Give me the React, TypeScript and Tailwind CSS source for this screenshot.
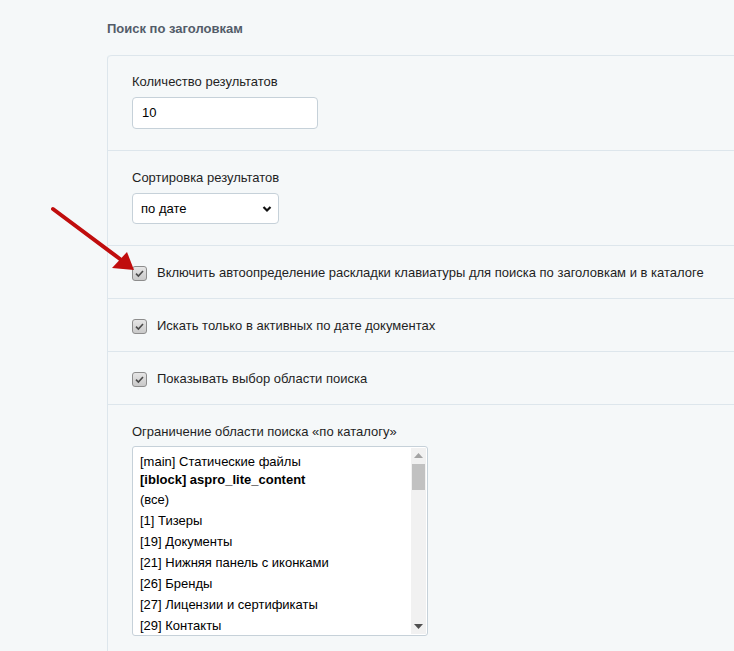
import React from 'react';

const font = { fontFamily: '"Liberation Sans", Arial, sans-serif' };

const CheckMark = () => (
  <span className="flex h-[15px] w-[15px] shrink-0 items-center justify-center rounded-[3px] border border-[#8d8d8d] bg-gradient-to-b from-[#e6e6e6] to-[#c9c9c9]">
    <svg width="11" height="11" viewBox="0 0 11 11" fill="none">
      <path d="M2 5.6 L4.4 8 L9 3" stroke="#4a4a4a" strokeWidth="1.6" />
    </svg>
  </span>
);

const CheckRow = ({ label }: { label: string }) => (
  <div className="flex h-[53px] items-center gap-[10px] border-t border-[#dde6ec] pl-[24px] pt-[2px]">
    <CheckMark />
    <span className="text-[13px] text-[#1f1f1f]">{label}</span>
  </div>
);

const catalogItems = [
  { text: '[main] Статические файлы', h: 'h-[19px]' },
  { text: '[iblock] aspro_lite_content', h: 'h-[18px]', bold: true },
  { text: '(все)', h: 'h-[21px]' },
  { text: '[1] Тизеры', h: 'h-[21px]' },
  { text: '[19] Документы', h: 'h-[21px]' },
  { text: '[21] Нижняя панель с иконками', h: 'h-[21px]' },
  { text: '[26] Бренды', h: 'h-[21px]' },
  { text: '[27] Лицензии и сертификаты', h: 'h-[21px]' },
  { text: '[29] Контакты', h: 'h-[21px]' },
];

const App = () => {
  return (
    <div className="relative min-h-[651px] overflow-hidden bg-[#f5f8f9] pl-[107px]" style={font}>
      {/* pointer arrow */}
      <svg className="absolute left-0 top-0" width="150" height="290" viewBox="0 0 150 290">
        <line x1="53" y1="209" x2="120" y2="259" stroke="#c00d0d" strokeWidth="4" strokeLinecap="round" />
        <polygon points="134,270 112,268 127,252" fill="#c00d0d" />
      </svg>

      <div className="flex h-[55px] items-center pt-[2px]">
        <h2 className="text-[13px] font-bold text-[#535c69]">Поиск по заголовкам</h2>
      </div>

      <div className="rounded-tl-[4px] border-l border-[#dde6ec]">
        <div className="h-[95px] rounded-tl-[4px] border-t border-[#dde6ec] pl-[24px] pt-[18px]">
          <div className="h-4 text-[13px] leading-4 text-[#1f1f1f]">Количество результатов</div>
          <div className="mt-[7px] flex h-[32px] w-[186px] items-center rounded-[4px] border border-[#c6d1d9] bg-white pl-[9px] text-[13px] text-black">
            10
          </div>
        </div>

        <div className="h-[95px] border-t border-[#dde6ec] pl-[24px] pt-[19px]">
          <div className="h-4 text-[13px] leading-4 text-[#1f1f1f]">Сортировка результатов</div>
          <div className="mt-[7px] flex h-[31px] w-[147px] items-center justify-between rounded-[4px] border border-[#c6d1d9] bg-white pl-[8px] pr-[6px] text-[13px] text-black">
            <span>по дате</span>
            <svg width="10" height="8" viewBox="0 0 10 8" fill="none">
              <path d="M1.5 2 L5 5.5 L8.5 2" stroke="#111" strokeWidth="2.2" />
            </svg>
          </div>
        </div>

        <CheckRow label="Включить автоопределение раскладки клавиатуры для поиска по заголовкам и в каталоге" />
        <CheckRow label="Искать только в активных по дате документах" />
        <CheckRow label="Показывать выбор области поиска" />

        <div className="h-[260px] border-t border-[#dde6ec] pl-[24px] pt-[19px]">
          <div className="h-4 text-[13px] leading-4 text-[#1f1f1f]">Ограничение области поиска «по каталогу»</div>
          <div className="mt-[6px] flex h-[190px] w-[296px] overflow-hidden rounded-[3px] border border-[#c6d1d9] bg-white">
            <div className="flex-1 pl-[7px] pt-[5px] text-[13px] text-black">
              {catalogItems.map((item) => (
                <div key={item.text} className={`${item.h} flex items-center ${item.bold ? 'font-bold' : ''}`}>
                  {item.text}
                </div>
              ))}
            </div>
            <div className="my-[1px] mr-[1px] flex w-[15px] flex-col items-center bg-[#f1f1f1]">
              <svg className="mt-[5px]" width="9" height="5" viewBox="0 0 9 5">
                <polygon points="4.5,0 9,5 0,5" fill="#a3a3a3" />
              </svg>
              <div className="mt-[6px] h-[26px] w-[13px] bg-[#c1c1c1]" />
              <div className="flex-1" />
              <svg className="mb-[5px]" width="9" height="5" viewBox="0 0 9 5">
                <polygon points="0,0 9,0 4.5,5" fill="#505050" />
              </svg>
            </div>
          </div>
        </div>
      </div>
    </div>
  );
};

export default App;
